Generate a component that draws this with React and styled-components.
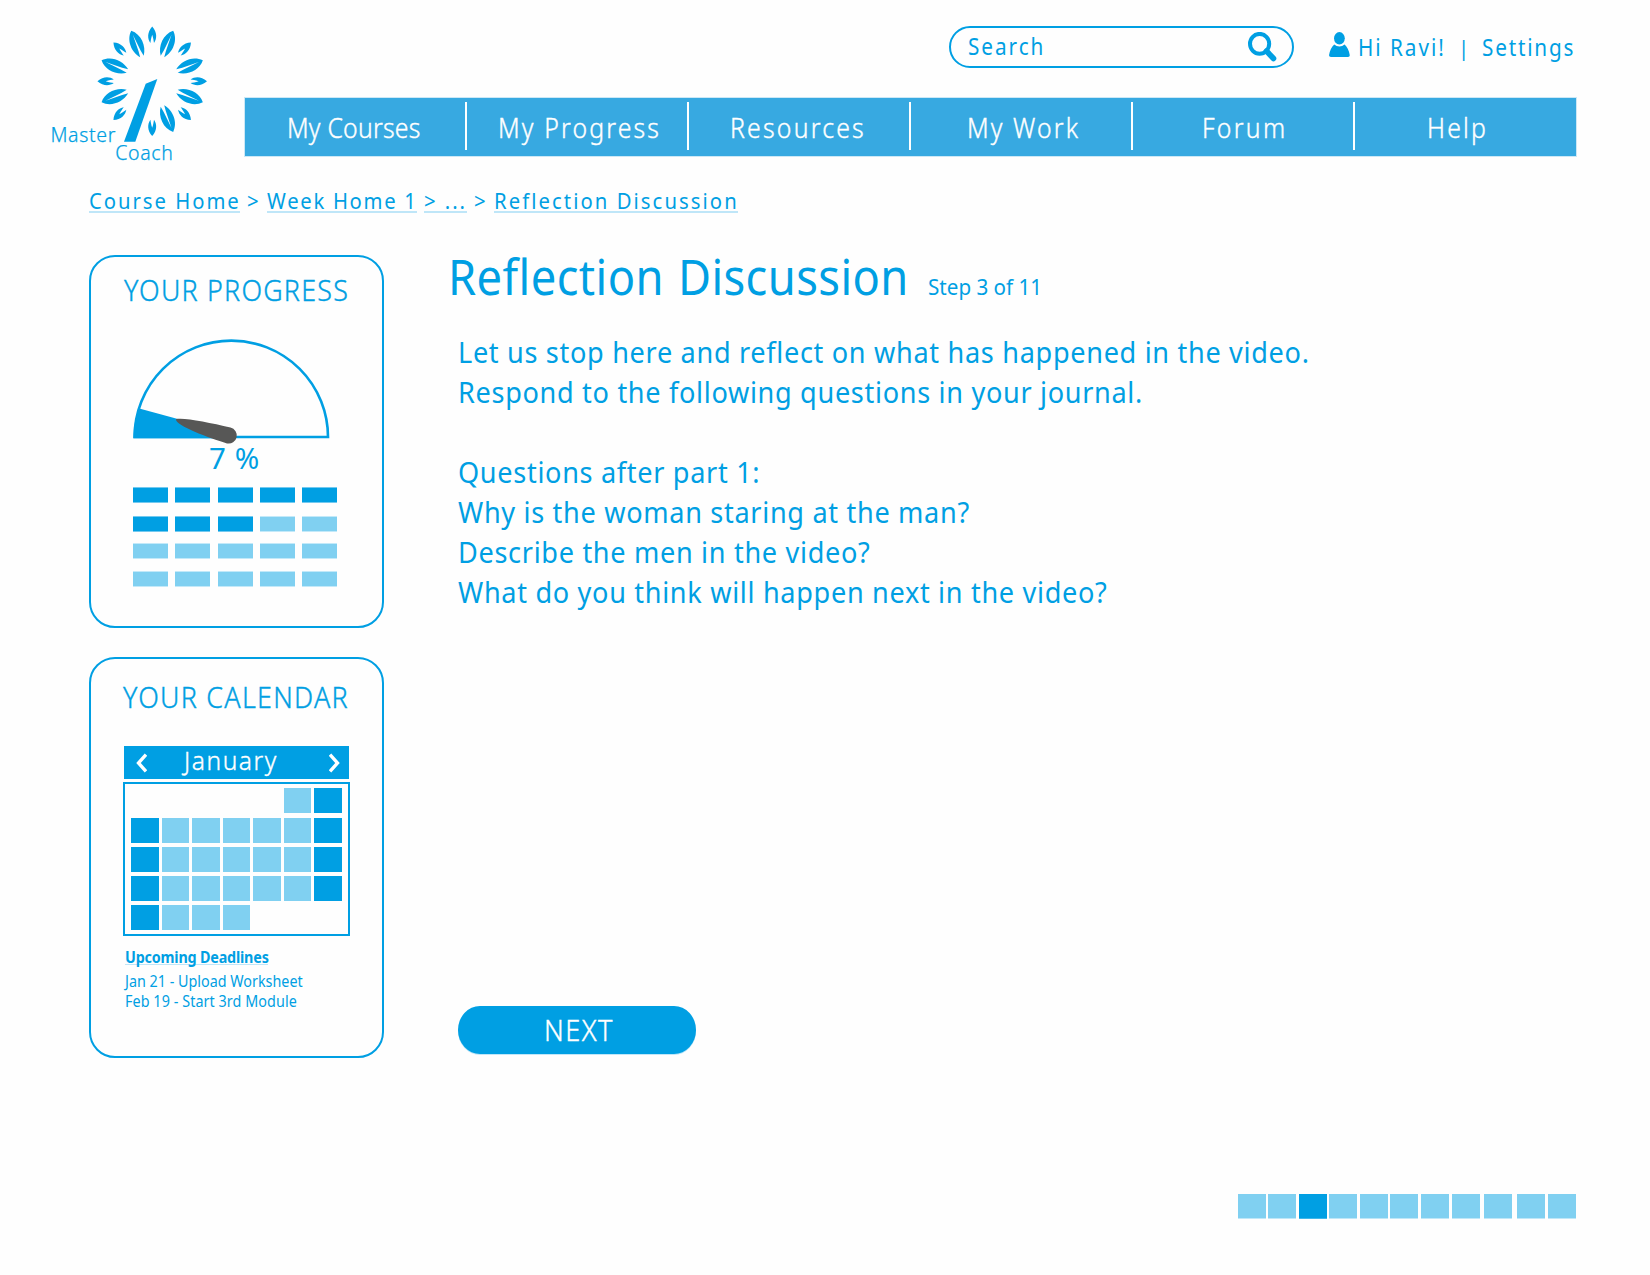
import React from 'react';
import styled, { createGlobalStyle } from 'styled-components';

const blue = '#009fe3';
const navBlue = '#37a9e1';
const pale = '#80d0f1';
const underline = '#bfe6f8';
const sans = '"Noto Sans", "Open Sans", sans-serif';

const GlobalStyle = createGlobalStyle`
  body { margin: 0; background: #fefefe; }
  * { box-sizing: border-box; }
`;

const Page = styled.div`
  width: 1650px;
  height: 1275px;
  display: flex;
  flex-direction: column;
  overflow: hidden;
  background: #fefefe;
  color: ${blue};
  font-family: ${sans};
`;

/* Slightly condensed text; $track is the letter spacing, $book a weight between light and regular */
const Label = styled.span`
  display: inline-block;
  flex: none;
  white-space: pre;
  transform: scaleX(${(p) => p.$stretch || 0.925});
  transform-origin: left center;
  font-size: ${(p) => p.$size}px;
  font-weight: ${(p) => (p.$book ? 300 : p.$weight || 400)};
  -webkit-text-stroke: ${(p) => (p.$book ? '0.4px currentColor' : '0')};
  letter-spacing: ${(p) => p.$track || 0}px;
  word-spacing: ${(p) => p.$words || 0}px;
`;

const Header = styled.header`
  display: flex;
  height: 168px;
`;

const LogoBox = styled.div`
  width: 245px;
  flex: none;
`;

const HeaderMain = styled.div`
  width: 1331px;
`;

const UserBar = styled.div`
  display: flex;
  align-items: flex-start;
  height: 98px;
  padding: 26px 0 0 704px;
`;

const SearchBox = styled.div`
  display: flex;
  align-items: flex-start;
  justify-content: space-between;
  flex: none;
  width: 345px;
  height: 42px;
  padding: 0 15px 0 17px;
  border: 2px solid ${blue};
  border-radius: 21px;
  line-height: 36px;

  svg { margin-top: 4px; flex: none; }
`;

const UserIcon = styled.svg`
  flex: none;
  margin: 6px 0 0 35px;
`;

const UserCell = styled.div`
  flex: none;
  width: ${(p) => p.$w}px;
  margin-left: ${(p) => p.$left || 0}px;
  line-height: 42px;
`;

const Nav = styled.nav`
  display: flex;
  align-items: center;
  height: 58px;
  background: ${navBlue};
  box-shadow: 0 0 0 1px rgba(55, 169, 225, 0.25);
  color: #fff;
`;

const NavItem = styled.a`
  width: 220px;
  padding: 5px 0 0 ${(p) => p.$pad}px;
  line-height: 59px;
`;

const NavDivider = styled.span`
  width: 2px;
  height: 48px;
  margin-top: -2px;
  background: #fff;
`;

const Breadcrumb = styled.div`
  display: flex;
  height: 45px;
  padding: 17px 0 0 89px;
`;

const Crumb = styled.a`
  flex: none;
  width: ${(p) => p.$w}px;
  height: 28px;
  border-bottom: 2px solid ${(p) => (p.$plain ? 'transparent' : underline)};
  line-height: 31px;
`;

const Content = styled.div`
  display: flex;
  padding-left: 89px;
`;

const Sidebar = styled.aside`
  width: 358px;
  padding-top: 42px;
  flex: none;
`;

const Card = styled.section`
  width: 295px;
  height: ${(p) => p.$h}px;
  margin-bottom: 29px;
  padding-top: ${(p) => p.$top}px;
  border: 2px solid ${blue};
  border-radius: 26px;
`;

const CardTitle = styled.div`
  height: 40px;
  padding-left: ${(p) => p.$pad}px;
  line-height: 41px;
`;

const Gauge = styled.svg`
  display: block;
  overflow: visible;
`;

const Percent = styled.div`
  height: 30px;
  margin-bottom: 14px;
  padding-left: 118px;
  line-height: 30px;
`;

const BlockRow = styled.div`
  display: grid;
  grid-template-columns: repeat(5, 35px);
  column-gap: 7.33px;
  margin: ${(p) => p.$gap}px 0 0 42px;
`;

const Block = styled.span`
  height: 16px;
  background: ${(p) => (p.$on ? blue : pale)};
  background-clip: padding-box;
  border: solid ${(p) => (p.$on ? '#73c9ef' : '#c3e9f9')};
  border-width: 1px 0;
`;

const Calendar = styled.div`
  width: 227px;
  margin: 30px 0 0 32px;
`;

const MonthBar = styled.div`
  display: flex;
  align-items: center;
  width: 225px;
  height: 33px;
  margin: 0 0 3px 1px;
  padding: 0 9px 0 12px;
  background: ${blue};
  color: #fff;
`;

const Month = styled.div`
  flex: 1;
  padding-left: 37px;
  line-height: 28px;
  margin-top: -1px;
`;

const Days = styled.div`
  display: grid;
  grid-template-columns: repeat(7, 27.5px);
  grid-auto-rows: 25px;
  gap: 4.2px 3px;
  height: 154px;
  padding: 4.4px 0 0 6.2px;
  border: 2px solid ${blue};
`;

const Day = styled.span`
  background: ${(p) => (p.$kind === 'x' ? 'none' : p.$kind === 'd' ? blue : pale)};
`;

const Deadlines = styled.div`
  margin: 11px 0 0 34px;
  line-height: 21px;
`;

const DeadlineTitle = styled.div`
  width: 143px;
  height: 18px;
  margin-bottom: 6px;
  border-bottom: 1px solid ${underline};
`;

const Deadline = styled.div`
  height: 20px;
`;

const Main = styled.main`
  width: 1129px;
  padding-top: 33px;
`;

const Heading = styled.div`
  display: flex;
  align-items: baseline;
  height: 60px;
  padding-left: 1px;
  line-height: 61px;
`;

const HeadingText = styled.div`
  width: 480px;
`;

const Copy = styled.div`
  height: 674px;
  margin-top: 26px;
  padding-left: 11px;
`;

const Line = styled.div`
  height: 40px;
  line-height: 39px;
`;

const NextButton = styled.button`
  display: block;
  width: 238px;
  height: 48px;
  margin-left: 11px;
  padding: 0 0 0 85.5px;
  border: 0;
  border-radius: 22px / 24px;
  background: ${blue};
  box-shadow: 0 1px 0 ${underline};
  color: #fff;
  font-family: ${sans};
  line-height: 48px;
  text-align: left;
`;

const Steps = styled.div`
  display: flex;
  margin: 140px 0 0 791px;
`;

const Step = styled.span`
  width: 28px;
  height: 25px;
  margin-left: ${(p) => p.$gap}px;
  background: ${(p) => (p.$on ? blue : pale)};
  border-bottom: 1px solid ${(p) => (p.$on ? '#40b7ea' : '#bfe7f8')};
`;

const bigLeaves = [22.5, 67.5, 112.5, 157.5, 247.5, 292.5, 337.5];
const smallLeaves = [0, 45, 90, 135, 180, 225, 270, 315];

function Logo() {
  return (
    <svg width="245" height="168" viewBox="0 0 245 168" fill={blue}>
      <g transform="translate(152.2 81.3)">
        {bigLeaves.map((a) => (
          <path key={a} transform={`rotate(${a})`} d="M0 -54.8C8 -48 8.2 -35 1.9 -26.8L1.1 -33L0 -50.5L-1.1 -33L-1.9 -26.8C-8.2 -35 -8 -48 0 -54.8Z" />
        ))}
        {smallLeaves.map((a) => (
          <path key={a} transform={`rotate(${a})`} d="M0 -54.8C5.2 -49 4.8 -42.5 1.8 -38.4C1.4 -40.5 1.2 -43 0 -46.5C-1.2 -43 -1.4 -40.5 -1.8 -38.4C-4.8 -42.5 -5.2 -49 0 -54.8Z" />
        ))}
      </g>
      <path d="M145.7 83.7L157.3 79L135.3 141.7H124Z" />
      <g fontFamily={sans} fontSize="19.5" fontWeight="300" letterSpacing="0.65" stroke={blue} strokeWidth="0.25">
        <text x="50.4" y="141.8">Master</text>
        <text x="115.2" y="159.8">Coach</text>
      </g>
    </svg>
  );
}

const navItems = [
  ['My Courses', 42, 0.25],
  ['My Progress', 31, 2.35],
  ['Resources', 40.5, 2.4],
  ['My Work', 55.5, 2.3],
  ['Forum', 68.5, 2.5],
  ['Help', 72, 2.4],
];

const blockRows = [
  [0, 5],
  [13, 3],
  [11, 0],
  [12, 0],
];

const days = 'xxxxxld' + 'dllllld' + 'dllllld' + 'dllllld' + 'dlllxxx';

const copyLines = [
  'Let us stop here and reflect on what has happened in the video.',
  'Respond to the following questions in your journal.',
  '',
  'Questions after part 1:',
  'Why is the woman staring at the man?',
  'Describe the men in the video?',
  'What do you think will happen next in the video?',
];

const stepGaps = [0, 2, 3, 2, 3, 2, 3, 3, 4, 5, 3];

export default function App() {
  return (
    <Page>
      <GlobalStyle />
      <Header>
        <LogoBox><Logo /></LogoBox>
        <HeaderMain>
          <UserBar>
            <SearchBox>
              <Label $size={23} $track={2.2} $stretch={0.9}>Search</Label>
              <svg width="29" height="30" viewBox="0 0 29 30" fill="none" stroke={blue}>
                <ellipse cx="11.6" cy="11.8" rx="9.6" ry="9.9" strokeWidth="4" />
                <path d="M18.5 19L25.5 26.5" strokeWidth="5.6" strokeLinecap="round" />
              </svg>
            </SearchBox>
            <UserIcon width="21" height="25" viewBox="0 0 21 25" fill={blue}>
              <ellipse cx="10.4" cy="6.3" rx="5.4" ry="6.2" />
              <path d="M5.2 12.5Q7.5 14.6 10.4 14.6Q13.3 14.6 15.6 12.5Q19.5 16 20.8 23.2Q20.8 25 19 25H2Q0 25 0 23.2Q1.3 16 5.2 12.5Z" />
            </UserIcon>
            <UserCell $left={8} $w={99.5}><Label $size={23} $track={2.2} $stretch={0.9}>Hi Ravi!</Label></UserCell>
            <UserCell $w={24}><Label $size={22}>|</Label></UserCell>
            <UserCell $w={95}><Label $size={23} $track={2} $stretch={0.9}>Settings</Label></UserCell>
          </UserBar>
          <Nav>
            {navItems.map(([text, pad, track], i) => (
              <React.Fragment key={text}>
                {i > 0 && <NavDivider />}
                <NavItem $pad={pad}><Label $size={26.8} $book $track={track}>{text}</Label></NavItem>
              </React.Fragment>
            ))}
          </Nav>
        </HeaderMain>
      </Header>

      <Breadcrumb>
        <Crumb $w={151}><Label $size={22.5} $track={2.2} $stretch={0.9}>Course Home</Label></Crumb>
        <Crumb $w={6.5} $plain />
        <Crumb $w={20.5} $plain><Label $size={22}>{'>'}</Label></Crumb>
        <Crumb $w={150}><Label $size={22.5} $track={1.9} $stretch={0.9}>Week Home 1</Label></Crumb>
        <Crumb $w={7} $plain />
        <Crumb $w={43}><Label $size={22} $track={2.1}>{'> ...'}</Label></Crumb>
        <Crumb $w={7} $plain />
        <Crumb $w={20} $plain><Label $size={22}>{'>'}</Label></Crumb>
        <Crumb $w={244}><Label $size={22.5} $track={2.3} $stretch={0.9}>Reflection Discussion</Label></Crumb>
      </Breadcrumb>

      <Content>
        <Sidebar>
          <Card $h={373} $top={12}>
            <CardTitle $pad={33}><Label $size={29} $book $track={1.33}>YOUR PROGRESS</Label></CardTitle>
            <Gauge width="291" height="134" viewBox="91 308.6 291 134">
              <path d="M134.6 436.6A96.7 96.4 0 0 1 328 436.6Z" fill="none" stroke={blue} strokeWidth="2.6" />
              <path d="M133.4 437.8C133.4 427 135.5 416 139.3 408L231 433V437.8Z" fill={blue} />
              <path d="M175.8 418.9C183 416.8 209 422.2 230.5 427.2A8 8 0 0 1 227 443C209 437.5 176 425.5 175.8 418.9Z" fill="#575756" />
            </Gauge>
            <Percent><Label $size={29.5} $track={0.6} $stretch={1}>7 %</Label></Percent>
            {blockRows.map(([gap, filled], r) => (
              <BlockRow key={r} $gap={gap}>
                {[0, 1, 2, 3, 4].map((c) => <Block key={c} $on={c < filled} />)}
              </BlockRow>
            ))}
          </Card>
          <Card $h={401} $top={17}>
            <CardTitle $pad={32}><Label $size={29} $book $track={1.4}>YOUR CALENDAR</Label></CardTitle>
            <Calendar>
              <MonthBar>
                <svg width="11" height="20" viewBox="0 0 11 20" fill="none" stroke="#fff" strokeWidth="3.4"><path d="M10 1.5L2.5 10L10 18.5" /></svg>
                <Month><Label $size={26.5} $book $track={1.7}>January</Label></Month>
                <svg width="11" height="20" viewBox="0 0 11 20" fill="none" stroke="#fff" strokeWidth="3.4"><path d="M1 1.5L8.5 10L1 18.5" /></svg>
              </MonthBar>
              <Days>
                {days.split('').map((kind, i) => <Day key={i} $kind={kind} />)}
              </Days>
            </Calendar>
            <Deadlines>
              <DeadlineTitle><Label $size={15.5} $weight={700} $track={-0.2}>Upcoming Deadlines</Label></DeadlineTitle>
              <Deadline><Label $size={15.5}>Jan 21 - Upload Worksheet</Label></Deadline>
              <Deadline><Label $size={15.5} $track={0.08}>Feb 19 - Start 3rd Module</Label></Deadline>
            </Deadlines>
          </Card>
        </Sidebar>

        <Main>
          <Heading>
            <HeadingText><Label $size={49.8} $track={0.45} $words={2} $stretch={0.91}>Reflection Discussion</Label></HeadingText>
            <Label $size={22.3}>Step 3 of 11</Label>
          </Heading>
          <Copy>
            {copyLines.map((line, i) => (
              <Line key={i}><Label $size={29.7} $track={0.745} $stretch={0.913}>{line}</Label></Line>
            ))}
          </Copy>
          <NextButton><Label $size={29.3} $book $track={1.6}>NEXT</Label></NextButton>
          <Steps>
            {stepGaps.map((gap, i) => <Step key={i} $gap={gap} $on={i === 2} />)}
          </Steps>
        </Main>
      </Content>
    </Page>
  );
}
